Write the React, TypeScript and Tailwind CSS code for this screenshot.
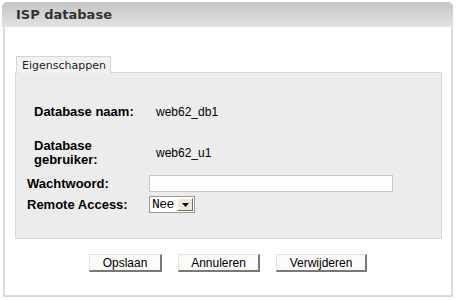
export default function App() {
  const rows = [
    { label: "Database naam:", value: "web62_db1" },
  ];

  return (
    <div className="w-[456px] h-[300px] bg-white pt-[2px] pl-[2px]">
      <div className="w-[451px]">
        {/* Header */}
        <div className="h-[25px] rounded-t-[5px] bg-gradient-to-b from-[#c4c4c4] to-[#e3e3e3] flex items-center pl-[14px]">
          <h1 className="font-['DejaVu_Sans',sans-serif] text-[13px] font-bold text-[#333333] leading-none">
            ISP database
          </h1>
        </div>

        {/* Body */}
        <div className="ml-[1px] h-[270px] border-x-2 border-b-2 border-[#dddddd] bg-white pl-[10px] pt-[29px]">
          {/* Tab */}
          <div className="ml-[1px] w-[95px] h-[17px] -mb-px relative border border-b-0 border-[#d6d6d6] bg-[#f2f2f2] flex items-center pl-[5px]">
            <span className="font-['DejaVu_Sans',sans-serif] text-[11px] text-[#222222] leading-none">
              Eigenschappen
            </span>
          </div>

          {/* Panel */}
          <div className="w-[427px] h-[167px] border border-[#d9d9d9] bg-[#ececec] pt-[22px] font-['Liberation_Sans',Arial,sans-serif] text-[12px] text-black">
            {rows.map((r) => (
              <div key={r.label} className="h-[34px] flex items-center">
                <div className="w-[133px] pl-[18px] font-bold text-[13px]">{r.label}</div>
                <div className="pl-[7px]">{r.value}</div>
              </div>
            ))}

            <div className="h-[44px] mt-[2px] flex items-center">
              <div className="w-[133px] pl-[18px] font-bold text-[13px] leading-[14px]">
                Database
                <br />
                gebruiker:
              </div>
              <div className="pl-[7px]">web62_u1</div>
            </div>

            <div className="h-[17px] flex items-center">
              <div className="w-[133px] pl-[11px] font-bold text-[13px]">Wachtwoord:</div>
              <input
                type="password"
                className="w-[244px] h-[17px] border border-[#c8c8c8] bg-[#fdfdfd] outline-none"
              />
            </div>

            <div className="h-[17px] mt-[4px] flex items-center">
              <div className="w-[133px] pl-[11px] font-bold text-[13px]">Remote Access:</div>
              <div className="w-[46px] h-[17px] border border-[#9a9a9a] bg-white flex items-center justify-between pl-[2px] pr-[1px]">
                <span className="font-['Liberation_Mono','Courier_New',monospace] text-[13px] leading-none tracking-[-0.5px]">
                  Nee
                </span>
                <span className="w-[16px] h-[13px] bg-[#ece9d8] border-t border-l border-t-white border-l-white border-b border-r border-b-[#716f64] border-r-[#716f64] flex items-center justify-center">
                  <svg width="7" height="4" viewBox="0 0 7 4">
                    <path d="M0 0h7L3.5 4z" fill="#000000" />
                  </svg>
                </span>
              </div>
            </div>
          </div>

          {/* Buttons */}
          <div className="-ml-[10px] mt-[15px] flex justify-center gap-[16px] font-['Liberation_Sans',Arial,sans-serif] text-[12px] text-black">
            <button className="w-[73px] h-[18px] bg-[#fbfbfb] border-t border-l border-[#e6e4da] border-r-2 border-b-2 border-r-[#7b786f] border-b-[#7b786f] leading-none">
              Opslaan
            </button>
            <button className="w-[82px] h-[18px] bg-[#fbfbfb] border-t border-l border-[#e6e4da] border-r-2 border-b-2 border-r-[#7b786f] border-b-[#7b786f] leading-none">
              Annuleren
            </button>
            <button className="w-[91px] h-[18px] bg-[#fbfbfb] border-t border-l border-[#e6e4da] border-r-2 border-b-2 border-r-[#7b786f] border-b-[#7b786f] leading-none">
              Verwijderen
            </button>
          </div>
        </div>
      </div>
    </div>
  );
}
